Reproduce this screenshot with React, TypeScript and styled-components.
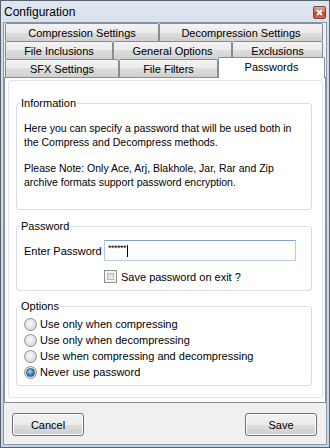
import React from "react";
import styled, { createGlobalStyle } from "styled-components";

const Global = createGlobalStyle`
  html, body {
    margin: 0;
    padding: 0;
    background: #ffffff;
  }
  body {
    font-family: "Liberation Sans", Arial, sans-serif;
    font-size: 10.5px;
    color: #000;
  }
  * {
    box-sizing: border-box;
  }
`;

const Window = styled.div`
  width: 330px;
  height: 448px;
  border: 1px solid #56626f;
  background: linear-gradient(#dfe6ee, #cfdbe8 60px, #c5d6e8);
  padding: 0 2px 2px 2px;
  display: flex;
  flex-direction: column;
`;

const TitleBar = styled.div`
  height: 21px;
  display: flex;
  align-items: center;
  justify-content: space-between;
  padding: 0 1px 0 1px;
`;

const Title = styled.span`
  font-size: 12px;
  color: #000;
`;

const CloseButton = styled.div`
  width: 13px;
  height: 13px;
  margin-top: 1px;
  border: 1px solid #6e4a45;
  border-radius: 2px;
  background: linear-gradient(#e9a79a, #cc5a45 50%, #b8341f 51%, #d2705a);
  display: flex;
  align-items: center;
  justify-content: center;
`;

const Body = styled.div`
  flex: 1;
  border: 1px solid #8a99a9;
  background: #f0f0f0;
  display: flex;
  flex-direction: column;
`;

const Tabs = styled.div`
  display: flex;
  flex-direction: column;
  padding-left: 1px;
`;

const TabRow = styled.div`
  display: flex;
  align-items: flex-end;
  height: 18px;
`;

const Tab = styled.div<{ $w: number; $active?: boolean }>`
  width: ${(p) => p.$w}px;
  height: ${(p) => (p.$active ? 21 : 18)}px;
  margin-bottom: ${(p) => (p.$active ? -1 : 0)}px;
  position: relative;
  z-index: ${(p) => (p.$active ? 1 : 0)};
  border: 1px solid #898c95;
  border-bottom: none;
  border-radius: 2px 2px 0 0;
  background: ${(p) =>
    p.$active
      ? "#ffffff"
      : "linear-gradient(#f3f3f3, #ebebeb 50%, #dedede 50%, #d0d0d0)"};
  display: flex;
  align-items: ${(p) => (p.$active ? "flex-start" : "center")};
  padding-top: ${(p) => (p.$active ? 3 : 0)}px;
  justify-content: center;
  font-size: 11px;
  white-space: nowrap;
`;

const Panel = styled.div`
  flex: 1;
  border: 1px solid #898c95;
  background: #ffffff;
  padding: 2px 2px 4px 3px;
  display: flex;
`;

const Frame = styled.div`
  flex: 1;
  border: 1px solid #dde4ea;
  border-radius: 3px;
  padding: 16px 10px 0 7px;
  display: flex;
  flex-direction: column;
`;

const Group = styled.fieldset<{ $gap?: number }>`
  margin: ${(p) => p.$gap ?? 0}px 0 0 0;
  padding: 0;
  border: 1px solid #d5dfe5;
  border-radius: 3px;
  min-width: 0;
`;

const Legend = styled.legend`
  font-size: 11px;
  line-height: 13px;
  padding: 0 1px;
  margin-left: 3px;
`;

const InfoContent = styled.div`
  padding: 11px 8px 20px 7px;
  line-height: 14px;
  font-size: 10.5px;
`;

const Para = styled.p<{ $last?: boolean }>`
  margin: 0 0 ${(p) => (p.$last ? 0 : 12)}px 0;
`;

const PasswordContent = styled.div`
  padding: 7px 8px 7px 7px;
  display: flex;
  flex-direction: column;
  gap: 9px;
`;

const FieldRow = styled.div`
  display: flex;
  align-items: center;
  height: 21px;
`;

const FieldLabel = styled.span`
  width: 80px;
  font-size: 11px;
`;

const TextBox = styled.div`
  width: 192px;
  height: 21px;
  border: 1px solid;
  border-color: #7fa3c6 #b4cde6 #b4cde6 #b4cde6;
  background: #fff;
  display: flex;
  align-items: center;
  padding-left: 3px;
`;

const Masked = styled.span`
  font-size: 9px;
  letter-spacing: -0.5px;
  line-height: 9px;
  align-self: flex-start;
  margin-top: 3px;
`;

const Caret = styled.span`
  width: 1px;
  height: 12px;
  background: #000;
  margin-left: 1px;
`;

const CheckRow = styled.div`
  display: flex;
  align-items: center;
  height: 13px;
  padding-left: 80px;
  gap: 4px;
  font-size: 11px;
`;

const CheckBox = styled.span`
  width: 13px;
  height: 13px;
  border: 1px solid #8f8f8f;
  background: #ffffff;
  box-shadow: inset 0 0 0 2px #f4f4f4;
  position: relative;
  display: inline-block;

  &::after {
    content: "";
    position: absolute;
    left: 2px;
    top: 2px;
    right: 2px;
    bottom: 2px;
    border: 1px solid #b9b9b9;
    background: linear-gradient(135deg, #d4d4d4, #f4f4f4);
  }
`;

const OptionsContent = styled.div`
  padding: 3px 8px 5px 7px;
  display: flex;
  flex-direction: column;
`;

const RadioRow = styled.div`
  display: flex;
  align-items: center;
  height: 16px;
  gap: 3px;
  font-size: 11px;
`;

const Radio = styled.span<{ $checked?: boolean }>`
  width: 13px;
  height: 13px;
  border-radius: 50%;
  border: 1px solid #909090;
  background: radial-gradient(circle at 45% 40%, #fbfbfb, #e6e6e6 45%, #c9c9c9);
  display: flex;
  align-items: center;
  justify-content: center;

  &::after {
    content: "";
    display: ${(p) => (p.$checked ? "block" : "none")};
    width: 7px;
    height: 7px;
    border-radius: 50%;
    border: 1px solid #26537f;
    background: radial-gradient(circle at 40% 35%, #a6dcff, #2f87d0 55%, #164f8a);
  }
`;

const Footer = styled.div`
  height: 41px;
  display: flex;
  justify-content: space-between;
  align-items: flex-start;
  padding: 10px 9px 0 8px;
`;

const Button = styled.button`
  width: 72px;
  height: 23px;
  border: 1px solid #707070;
  border-radius: 3px;
  background: linear-gradient(#f2f2f2, #ebebeb 50%, #dddddd 50%, #cfcfcf);
  box-shadow: inset 0 0 0 1px #fcfcfc;
  font-family: "Liberation Sans", Arial, sans-serif;
  font-size: 11px;
  color: #000;
  padding: 0;
`;

const rows: { label: string; w: number; active?: boolean }[][] = [
  [
    { label: "Compression Settings", w: 154 },
    { label: "Decompression Settings", w: 164 },
  ],
  [
    { label: "File Inclusions", w: 108 },
    { label: "General Options", w: 119 },
    { label: "Exclusions", w: 91 },
  ],
  [
    { label: "SFX Settings", w: 114 },
    { label: "File Filters", w: 99 },
    { label: "Passwords", w: 107, active: true },
  ],
];

const options = [
  "Use only when compressing",
  "Use only when decompressing",
  "Use when compressing and decompressing",
  "Never use password",
];

export default function App() {
  return (
    <>
      <Global />
      <Window>
        <TitleBar>
          <Title>Configuration</Title>
          <CloseButton>
            <svg width="7" height="7" viewBox="0 0 7 7">
              <path d="M1 1 L6 6 M6 1 L1 6" stroke="#fff" strokeWidth="1.8" />
            </svg>
          </CloseButton>
        </TitleBar>
        <Body>
          <Tabs>
            {rows.map((row, i) => (
              <TabRow key={i}>
                {row.map((t) => (
                  <Tab key={t.label} $w={t.w} $active={t.active}>
                    {t.label}
                  </Tab>
                ))}
              </TabRow>
            ))}
          </Tabs>
          <Panel>
            <Frame>
              <Group>
                <Legend>Information</Legend>
                <InfoContent>
                  <Para>
                    Here you can specify a password that will be used both in
                    the Compress and Decompress methods.
                  </Para>
                  <Para $last>
                    Please Note: Only Ace, Arj, Blakhole, Jar, Rar and Zip
                    archive formats support password encryption.
                  </Para>
                </InfoContent>
              </Group>
              <Group $gap={10}>
                <Legend>Password</Legend>
                <PasswordContent>
                  <FieldRow>
                    <FieldLabel>Enter Password</FieldLabel>
                    <TextBox>
                      <Masked>******</Masked>
                      <Caret />
                    </TextBox>
                  </FieldRow>
                  <CheckRow>
                    <CheckBox />
                    <span>Save password on exit ?</span>
                  </CheckRow>
                </PasswordContent>
              </Group>
              <Group $gap={9}>
                <Legend>Options</Legend>
                <OptionsContent>
                  {options.map((o, i) => (
                    <RadioRow key={o}>
                      <Radio $checked={i === 3} />
                      <span>{o}</span>
                    </RadioRow>
                  ))}
                </OptionsContent>
              </Group>
            </Frame>
          </Panel>
          <Footer>
            <Button>Cancel</Button>
            <Button>Save</Button>
          </Footer>
        </Body>
      </Window>
    </>
  );
}
